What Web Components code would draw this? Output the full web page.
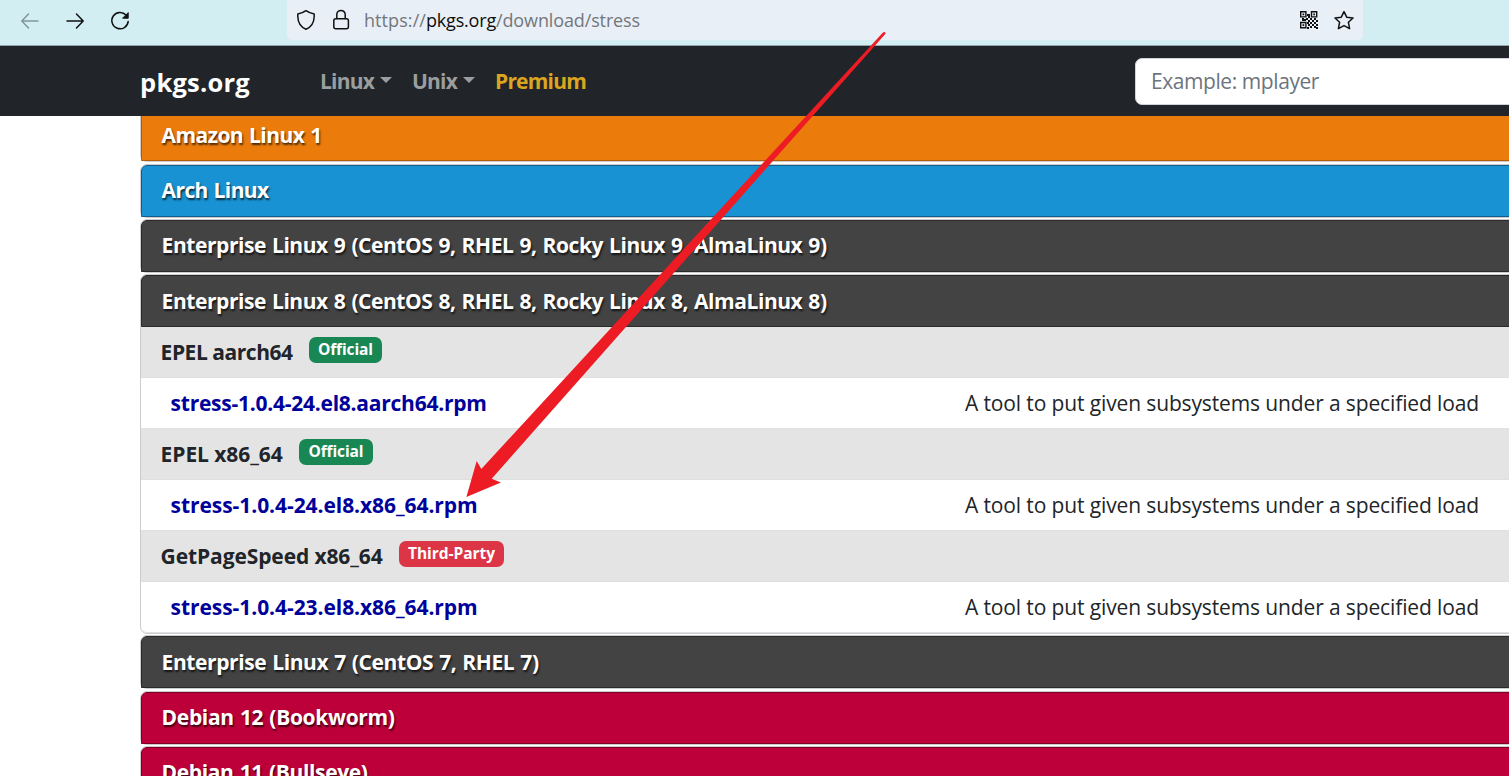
<!DOCTYPE html>
<html lang="en">
<head>
<meta charset="utf-8">
<title>stress - pkgs.org</title>
<style>
html,body{margin:0;height:776px;overflow:hidden;background:#fff}
body{font-family:"Open Sans","Noto Sans",sans-serif;font-size:21px;color:#212529}
</style>
</head>
<body>
<pkgs-page></pkgs-page>

<template id="t-page">
<style>
:host{display:block;position:relative;width:1509px;height:776px;overflow:hidden}
main{margin-left:140px;height:660px;overflow:hidden}
.list{margin-top:-8px;width:1500px}
</style>
<browser-bar></browser-bar>
<site-nav></site-nav>
<main><div class="list">
<distro-card style="--bg:#eb7c0c;--edge:#b35e09;--gap:2px;--drop:1px"><fit-text slot="title" w="160">Amazon Linux 1</fit-text></distro-card>
<distro-card style="--bg:#1892d2;--edge:#10608a;--gap:1px"><fit-text slot="title" w="107">Arch Linux</fit-text></distro-card>
<distro-card style="--bg:#434343;--edge:#2a2a2a;--gap:1px"><fit-text slot="title" w="665">Enterprise Linux 9 (CentOS 9, RHEL 9, Rocky Linux 9, AlmaLinux 9)</fit-text></distro-card>
<distro-card style="--bg:#434343;--edge:#2a2a2a;--gap:1px;--drop:1px"><fit-text slot="title" w="665">Enterprise Linux 8 (CentOS 8, RHEL 8, Rocky Linux 8, AlmaLinux 8)</fit-text>
<repo-row><fit-text w="132">EPEL aarch64</fit-text><text-badge slot="badge" style="--w:73px"><fit-text w="55">Official</fit-text></text-badge></repo-row>
<package-row><fit-text slot="name" w="316">stress-1.0.4-24.el8.aarch64.rpm</fit-text></package-row>
<repo-row><fit-text w="122">EPEL x86_64</fit-text><text-badge slot="badge" style="--w:74px"><fit-text w="55">Official</fit-text></text-badge></repo-row>
<package-row><fit-text slot="name" w="307">stress-1.0.4-24.el8.x86_64.rpm</fit-text></package-row>
<repo-row><fit-text w="222">GetPageSpeed x86_64</fit-text><text-badge slot="badge" style="--w:105px;--badge:#dc3545"><fit-text w="87">Third-Party</fit-text></text-badge></repo-row>
<package-row><fit-text slot="name" w="307">stress-1.0.4-23.el8.x86_64.rpm</fit-text></package-row>
</distro-card>
<distro-card style="--bg:#434343;--edge:#2a2a2a;--gap:2px;--drop:1px"><fit-text slot="title" w="377">Enterprise Linux 7 (CentOS 7, RHEL 7)</fit-text></distro-card>
<distro-card style="--bg:#bd0039;--edge:#80002a;--gap:1px"><fit-text slot="title" w="233">Debian 12 (Bookworm)</fit-text></distro-card>
<distro-card style="--bg:#bd0039;--edge:#80002a;--gap:1px"><fit-text slot="title" w="206">Debian 11 (Bullseye)</fit-text></distro-card>
</div></main>
<pointer-arrow></pointer-arrow>
</template>

<template id="t-bar">
<style>
:host{display:flex;box-sizing:border-box;height:46px;background:#d2eef2;border-bottom:1px solid #91a5a8;align-items:flex-start}
svg{display:block;fill:none;stroke:#111;stroke-width:1.5;stroke-linecap:round;stroke-linejoin:round;flex:none}
.nav{display:flex;width:287px;padding:10px 0 0 19px;gap:23px;box-sizing:border-box}
.url{display:flex;box-sizing:border-box;width:1076px;height:40px;background:#e9eff6;border-radius:0 0 5px 5px;padding:0 8px 0 8px;align-items:center;font-size:18px;color:#74777b;line-height:42px}
.lock{margin:0 12px 0 13px}
b{font-weight:400;color:#0c0c0d}
.end{margin-left:auto;display:flex;gap:14px}
</style>
<div class="nav">
<svg width="22" height="22" style="stroke:#81969b"><path d="M19 11H3M9.5 4 2.8 11 9.5 18"/></svg>
<svg width="22" height="22"><path d="M3 11H19M12.5 4 19.2 11 12.5 18"/></svg>
<svg width="22" height="22" viewBox="0 0 22 22"><path d="M17.2 5.2A8.2 8.2 0 1 0 19.2 11.4"/><path d="M19.2 3V8.2H14Z" fill="#111" stroke-width="1"/></svg>
</div>
<div class="url">
<svg width="22" height="22"><path d="M11 1.7C8.5 3.5 5.8 4.5 2.8 5V7.5C3 13.5 5.8 18.2 11 20.2C16.2 18.2 19 13.5 19.2 7.5V5C16.2 4.5 13.5 3.5 11 1.7Z"/></svg>
<svg class="lock" width="22" height="22"><rect x="3.8" y="9.7" width="14.6" height="10" rx="2"/><path d="M6.8 9.5V5.6a4.2 4.2 0 0 1 8.4 0V9.5"/></svg>
<fit-text w="62">https://</fit-text><b><fit-text w="70">pkgs.org</fit-text></b><fit-text w="144">/download/stress</fit-text>
<div class="end">
<svg width="20" height="20" viewBox="0 0 20 20" style="stroke-linecap:butt;stroke-linejoin:miter;margin-top:1px"><path stroke-width="1.4" d="M1.7 1.7h5.2v5.2H1.7zM12.5 1.7h5.2v5.2h-5.2zM1.7 12.5h5.2v5.2H1.7z"/><path stroke="none" fill="#111" d="M3.5 3.5h1.7v1.7H3.5zM14.3 3.5h1.7v1.7h-1.7zM3.5 14.3h1.7v1.7H3.5zM8 4h3v2H8zM9 6h2v2H9zM3 8h2v3H3zM5 9h2v2H5zM7 8h2v2H7zM9 10h2v2H9zM11 8h2v2h-2zM13 10h2v2h-2zM15 8h2v2h-2zM17 10h2v2h-2zM8 12h2v2H8zM11 12h2v2h-2zM15 12h2v2h-2zM9 14h2v2H9zM13 14h2v2h-2zM17 14h2v2h-2zM11 16h2v2h-2zM15 16h2v2h-2zM17 17h2v2h-2zM8 17h2v2H8z"/></svg>
<svg width="22" height="22" style="margin-top:1px"><path d="M11 1.6 13.7 7.2 20 8 15.4 12.3 16.6 18.7 11 15.6 5.4 18.7 6.6 12.3 2 8 8.3 7.2Z"/></svg>
</div>
</div>
</template>

<template id="t-nav">
<style>
:host{display:flex;height:70px;background:#212529;font-weight:700;line-height:70px;color:#9b9d9f;align-items:flex-start}
.brand{margin-left:140px;width:180px;color:#fff;font-size:25.5px;line-height:72px}
.item{display:flex;align-items:center;margin-right:20px;gap:6px}
.item i{border:6px solid transparent;border-top:6px solid;border-bottom:0;margin-top:-3px}
.prem{color:#dba520}
.search{box-sizing:border-box;width:480px;height:47px;margin:12px -106px 0 auto;flex:none;border:1px solid #ced4da;border-radius:7px;background:#fff;color:#6c757d;font-weight:400;line-height:45px;padding-left:15px}
</style>
<div class="brand"><fit-text w="110">pkgs.org</fit-text></div>
<div class="item"><fit-text w="54">Linux</fit-text><i></i></div>
<div class="item"><fit-text w="45">Unix</fit-text><i></i></div>
<div class="prem"><fit-text w="91">Premium</fit-text></div>
<div class="search"><fit-text w="168">Example: mplayer</fit-text></div>
</template>

<template id="t-card">
<style>
:host{display:block;border:1px solid #ccc;border-radius:7px;margin-bottom:var(--gap);background:#fff}
header{box-sizing:border-box;height:52px;background:var(--bg);border:1px solid var(--edge);border-radius:6px 6px 0 0;color:#fff;font-weight:700;line-height:49px;word-spacing:1px;padding:var(--drop,0px) 0 0 19.6px;text-shadow:1px 2px 2px rgba(0,0,0,.7)}
</style>
<header><slot name="title"></slot></header><slot></slot>
</template>

<template id="t-repo">
<style>
:host{display:flex;box-sizing:border-box;height:51px;background:#e4e4e4;border-bottom:1px solid #dfdfdf;padding-left:19.6px;font-weight:700;line-height:50px;gap:16.4px}
</style>
<slot></slot><slot name="badge"></slot>
</template>

<template id="t-badge">
<style>
:host{display:flex;justify-content:center;width:var(--w);height:26px;margin-top:10px;border-radius:7px;background:var(--badge,#198754);color:#fff;font-size:15.5px;font-weight:700;line-height:25px}
</style>
<slot></slot>
</template>

<template id="t-package">
<style>
:host{display:flex;box-sizing:border-box;height:51px;border-bottom:1px solid #dee2e6;line-height:50px;padding-left:29.6px}
:host(:last-child){border-radius:0 0 6px 6px}
.name{width:794.4px;color:#00009b;font-weight:700}
</style>
<div class="name"><slot name="name"></slot></div><fit-text w="514">A tool to put given subsystems under a specified load</fit-text>
</template>

<template id="t-arrow">
<style>
:host{position:absolute;inset:0;display:block;pointer-events:none}
svg{display:block}
</style>
<svg width="1509" height="776"><path fill="#ed1c24" d="M466.4 497 476.7 461 481.3 469 883 32.5Q885 31 885.7 33.5L491.7 478.7 500.9 482.4Z"/></svg>
</template>

<script>
const register = (tag, id) => customElements.define(tag, class extends HTMLElement {
  constructor() {
    super();
    this.attachShadow({ mode: "open" }).append(document.getElementById(id).content.cloneNode(true));
  }
});
register("pkgs-page", "t-page");
register("browser-bar", "t-bar");
register("site-nav", "t-nav");
register("distro-card", "t-card");
register("repo-row", "t-repo");
register("text-badge", "t-badge");
register("package-row", "t-package");
register("pointer-arrow", "t-arrow");

// A single line of text tracked to occupy the width in its "w" attribute.
customElements.define("fit-text", class extends HTMLElement {
  constructor() {
    super();
    this.attachShadow({ mode: "open" }).innerHTML =
      "<style>:host{display:block;white-space:nowrap;flex:none}span{display:inline}</style><span><slot></slot></span>";
  }
  connectedCallback() {
    const span = this.shadowRoot.querySelector("span");
    const target = Number(this.getAttribute("w"));
    const natural = span.getBoundingClientRect().width;
    span.style.letterSpacing = (target - natural) / this.textContent.length + "px";
    if (getComputedStyle(this.parentNode.host || this.parentNode).display.includes("flex")) this.style.width = target + "px";
  }
});
</script>
</body>
</html>
